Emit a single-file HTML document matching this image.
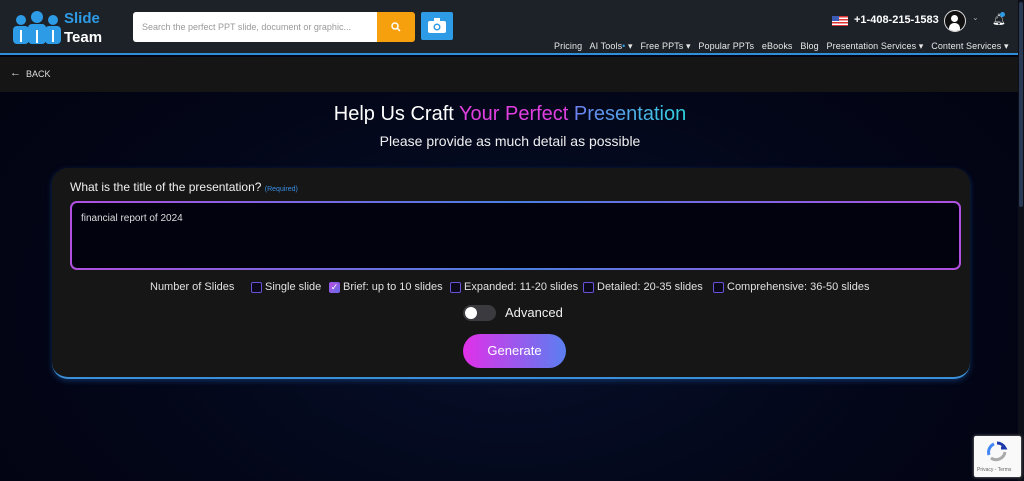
<!DOCTYPE html>
<html><head><meta charset="utf-8"><style>
*{margin:0;padding:0;box-sizing:border-box}
body{width:1024px;height:481px;overflow:hidden;background:radial-gradient(ellipse at 50% 65%,#07102a 0%,#030618 55%,#02030f 100%);font-family:"Liberation Sans",sans-serif;position:relative;color:#fff}
.hdr{position:absolute;left:0;top:0;width:1024px;height:55px;background:#1c2228;border-bottom:2px solid #2f8fd8}
.back{position:absolute;left:0;top:57px;width:1018px;height:35px;background:#151515;font-size:9px;color:#ddd}
.abs{position:absolute}
.nav{position:absolute;top:41px;font-size:9px;color:#e8e8e8;white-space:nowrap;letter-spacing:0.1px}
.card{position:absolute;left:52px;top:168px;width:918px;height:211px;background:#161616;border-radius:16px;border-bottom:2px solid #3a8fd6;box-shadow:0 2px 6px rgba(40,120,220,.35)}
.ta{position:absolute;left:70px;top:201px;width:891px;height:69px;border-radius:7px;background:linear-gradient(#02020f,#02020f) padding-box,linear-gradient(90deg,#b14fe0,#4a7fe0 50%,#b14fe0) border-box;border:2px solid transparent;font-size:10px;color:#ddd;padding:10px 9px}
.cb{display:inline-block;width:11px;height:11px;border:1.5px solid #6a4fd8;border-radius:2px;background:#0a0a1a;margin-right:3px;flex:none}
.opt{position:absolute;top:280px;font-size:11px;color:#e0e0e0;white-space:nowrap;line-height:13px;display:flex;align-items:center;height:14px}
</style></head><body>
<div class="hdr">
 <svg class="abs" style="left:12px;top:10px" width="50" height="36" viewBox="0 0 50 36">
  <g fill="#2e9be6"><circle cx="9" cy="10" r="5"/><circle cx="25" cy="7" r="6"/><circle cx="41" cy="10" r="5"/>
  <rect x="1" y="16" width="16" height="18" rx="4"/><rect x="16" y="14" width="18" height="20" rx="4"/><rect x="33" y="16" width="16" height="18" rx="4"/></g>
  <g fill="#fff"><rect x="8" y="20" width="2" height="12"/><rect x="24" y="20" width="2" height="13"/><rect x="40" y="20" width="2" height="12"/></g>
 </svg>
 <div class="abs" style="left:64px;top:10px;font-size:15px;font-weight:bold;color:#2e9be6;line-height:17px">Slide</div>
 <div class="abs" style="left:64px;top:29px;font-size:15px;font-weight:bold;color:#fff;line-height:17px">Team</div>
 <div class="abs" style="left:133px;top:12px;width:245px;height:30px;background:#fff;border-radius:3px 0 0 3px;font-size:9px;color:#999;padding:10px 9px">Search the perfect PPT slide, document or graphic...</div>
 <div class="abs" style="left:377px;top:12px;width:38px;height:30px;background:#f6a00e;border-radius:0 3px 3px 0"><svg style="position:absolute;left:14px;top:10px" width="10" height="10" viewBox="0 0 10 10"><circle cx="4" cy="4" r="3" fill="none" stroke="#fff" stroke-width="1.5"/><line x1="6" y1="6" x2="9" y2="9" stroke="#fff" stroke-width="1.5"/></svg></div>
 <div class="abs" style="left:421px;top:12px;width:32px;height:28px;background:#2e9be6;border-radius:2px"><svg style="position:absolute;left:7px;top:6px" width="18" height="15" viewBox="0 0 18 15"><rect x="0" y="3" width="18" height="12" rx="2" fill="#fff"/><rect x="6" y="0" width="6" height="4" fill="#fff"/><circle cx="9" cy="9" r="3.5" fill="#2e9be6"/><circle cx="9" cy="9" r="2" fill="#fff"/></svg></div>
 <div class="abs" style="left:832px;top:16px;width:16px;height:10px;background:repeating-linear-gradient(#d33 0 1.5px,#fff 1.5px 3px)"><div style="width:7px;height:5px;background:#3b5bb5"></div></div>
 <div class="abs" style="left:854px;top:14px;font-size:11px;font-weight:bold;color:#fff">+1-408-215-1583</div>
 <div class="abs" style="left:944px;top:10px;width:22px;height:22px;border-radius:50%;border:1.5px solid #ddd;background:#111;overflow:hidden"><div style="position:absolute;left:6px;top:4px;width:7px;height:7px;border-radius:50%;background:#fff"></div><div style="position:absolute;left:4px;top:12px;width:11px;height:8px;border-radius:5px 5px 0 0;background:#fff"></div></div>
 <div class="abs" style="left:972px;top:13px;font-size:8px;color:#aaa">⌄</div>
 <div class="abs" style="left:992px;top:13px;font-size:11px;color:#fff">🔔︎</div>
 <div class="abs" style="left:1000px;top:12px;width:5px;height:5px;border-radius:50%;background:#2e9be6"></div>
 <div class="nav" style="left:554px">Pricing&nbsp;&nbsp; AI Tools<span style="color:#2e9be6">•</span> ▾&nbsp;&nbsp; Free PPTs ▾&nbsp;&nbsp; Popular PPTs&nbsp;&nbsp; eBooks&nbsp;&nbsp; Blog&nbsp;&nbsp; Presentation Services ▾&nbsp;&nbsp; Content Services ▾</div>
</div>
<div class="back"><span class="abs" style="left:10px;top:10px;font-size:11px">←</span><span class="abs" style="left:26px;top:12px">BACK</span></div>
<div class="abs" style="left:1018px;top:0;width:6px;height:481px;background:#0d0f18"></div>
<div class="abs" style="left:1019px;top:2px;width:4px;height:205px;background:#2a3a55;border-radius:2px"></div>
<div class="abs" style="left:0;top:103px;width:1020px;text-align:center;font-size:20px;color:#fff">Help Us Craft <span style="color:#e03fe0">Your Perfect</span> <span style="background:linear-gradient(90deg,#6f7ff0,#30d5e0);-webkit-background-clip:text;color:transparent">Presentation</span></div>
<div class="abs" style="left:0;top:133px;width:1020px;text-align:center;font-size:14px;color:#f0f0f0">Please provide as much detail as possible</div>
<div class="card"></div>
<div class="abs" style="left:70px;top:180px;font-size:12px;color:#f0f0f0">What is the title of the presentation? <span style="font-size:7px;color:#3a8fe6">(Required)</span></div>
<div class="ta">financial report of 2024</div>
<div class="opt" style="left:150px">Number of Slides</div>
<div class="opt" style="left:251px"><span class="cb"></span>Single slide</div>
<div class="opt" style="left:329px"><span class="cb" style="background:linear-gradient(135deg,#c04de0,#5a6fe8);border-color:#8a5ae8;color:#fff;font-size:9px;line-height:8px;text-align:center">✓</span>Brief: up to 10 slides</div>
<div class="opt" style="left:450px"><span class="cb"></span>Expanded: 11-20 slides</div>
<div class="opt" style="left:583px"><span class="cb"></span>Detailed: 20-35 slides</div>
<div class="opt" style="left:713px"><span class="cb"></span>Comprehensive: 36-50 slides</div>
<div class="abs" style="left:463px;top:305px;width:33px;height:16px;border-radius:8px;background:#3a3a3f"><div style="position:absolute;left:2px;top:2px;width:12px;height:12px;border-radius:50%;background:#fff"></div></div>
<div class="abs" style="left:505px;top:305px;font-size:13px;color:#f0f0f0">Advanced</div>
<div class="abs" style="left:463px;top:334px;width:103px;height:34px;border-radius:17px;background:linear-gradient(90deg,#e030e8,#5a7ff0);font-size:13px;color:#fff;text-align:center;line-height:34px">Generate</div>
<div class="abs" style="left:974px;top:436px;width:47px;height:41px;background:#f9f9f9;border-radius:2px;box-shadow:0 0 3px #888"><svg style="position:absolute;left:12px;top:5px" width="22" height="22" viewBox="0 0 22 22"><path d="M11 2a9 9 0 0 1 8 5l-4 0" fill="none" stroke="#1c3aa9" stroke-width="3"/><path d="M19 11a9 9 0 0 1-14 6" fill="none" stroke="#aaa" stroke-width="3"/><path d="M3 14a9 9 0 0 1 5-11" fill="none" stroke="#4285f4" stroke-width="3"/></svg><div style="position:absolute;left:3px;top:31px;font-size:5px;color:#666">Privacy - Terms</div></div>
</body></html>
